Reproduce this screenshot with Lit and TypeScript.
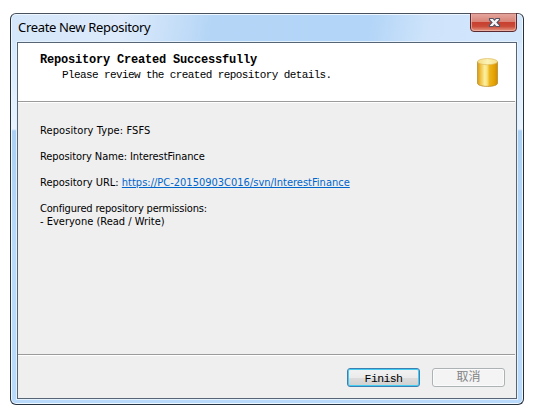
import { LitElement, html, css } from "lit";
import { customElement } from "lit/decorators.js";

@customElement("close-button")
class CloseButton extends LitElement {
  static styles = css`
    :host { display: block; width: 47px; height: 19px; }
    svg { display: block; }
  `;
  render() {
    return html`<svg width="47" height="19" viewBox="0 0 47 19">
      <defs>
        <linearGradient id="r" x1="0" y1="0" x2="0" y2="1">
          <stop offset="0" stop-color="#e5a8a0" /><stop offset=".46" stop-color="#d98578" />
          <stop offset=".5" stop-color="#c8402f" /><stop offset=".72" stop-color="#c94a38" />
          <stop offset="1" stop-color="#e8a28c" />
        </linearGradient>
      </defs>
      <path d="M.5 0V15Q.5 18.5 4 18.5H43Q46.5 18.5 46.5 15V0Z" fill="url(#r)" stroke="#5b2a30" />
      <path d="M1.5 1V14.5Q1.5 17.5 4.5 17.5H42.5Q45.5 17.5 45.5 14.5V1" fill="none" stroke="#f0b9ae" stroke-opacity=".7" />
      <path d="M19.5 5.5H23L24.5 7.2L26 5.5H29.5V7L27 9.5L29.5 12V13.5H26L24.5 11.8L23 13.5H19.5V12L22 9.5L19.5 7Z" fill="#f7f7f7" stroke="#555262" stroke-width="1.1" />
    </svg>`;
  }
}

@customElement("repository-icon")
class RepositoryIcon extends LitElement {
  static styles = css`
    :host { display: block; width: 21px; height: 29px; }
    svg { display: block; }
  `;
  render() {
    return html`<svg width="21" height="29" viewBox="0 0 22 30" preserveAspectRatio="none">
      <defs>
        <linearGradient id="b">
          <stop offset="0" stop-color="#d79a10" /><stop offset=".15" stop-color="#efc044" />
          <stop offset=".36" stop-color="#fbefa0" /><stop offset=".48" stop-color="#f8e27c" />
          <stop offset=".6" stop-color="#eeb41c" /><stop offset=".85" stop-color="#e3a000" />
          <stop offset="1" stop-color="#c98a08" />
        </linearGradient>
        <linearGradient id="t">
          <stop offset="0" stop-color="#f5dc80" /><stop offset=".5" stop-color="#fbf3b8" />
          <stop offset="1" stop-color="#f6e08a" />
        </linearGradient>
      </defs>
      <path d="M.5 4V26C.5 28 5 29.4 11 29.4S21.5 28 21.5 26V4Z" fill="url(#b)" stroke="#b98a2a" stroke-width=".8" />
      <ellipse cx="11" cy="3.8" rx="10.5" ry="3.2" fill="url(#t)" stroke="#dcb75c" stroke-width=".7" />
    </svg>`;
  }
}

@customElement("app-root")
class AppRoot extends LitElement {
  static styles = css`
    * { box-sizing: border-box; }
    :host {
      display: block; width: 534px; height: 416px; padding: 13px 0 0 10px;
      box-sizing: border-box; background: #fff; overflow: hidden; color: #000;
    }
    .window {
      width: 514px; height: 392px; display: flex; flex-direction: column;
      border: 1px solid #27323f; border-top-color: #48525e; border-radius: 6px;
      padding: 0 5px 5px; box-shadow: inset 0 0 0 1px #eef7ff;
      background:
        linear-gradient(100deg, #d5e7fa 0, #dceafb 110px, #c5def8 165px, #b4d5f6 200px, #b3d5f7 355px, #cfe4fb 415px, #d3e7fc 514px) 0 0 / 100% 29px no-repeat,
        linear-gradient(#d6e9fd 29px, #e8f3ff 115px, #abd0f3 117px, #b9dafb 240px);
    }
    .titlebar { height: 27px; flex: none; display: flex; justify-content: space-between; padding-right: 1px; }
    .titlebar close-button { margin-top: -1px; }
    .title { font: 13px/18px "Noto Sans", sans-serif; padding: 4px 0 0 2px; letter-spacing: -.33px; white-space: nowrap; }
    .client {
      display: flex; flex-direction: column; width: 500px; height: 357px; flex: none;
      margin: 1px 0 0 1px; border: 1px solid #566575; outline: 1px solid #e4f1fd; background: #efefef;
    }
    .head { height: 58px; flex: none; background: #fff; display: flex; justify-content: space-between; padding: 10px 18px 0 22px; }
    .head h1, .head p { margin: 0; font: 12px/15px "Liberation Mono", monospace; white-space: pre; }
    .head h1 { font-weight: bold; letter-spacing: -.2px; }
    .head p { padding-left: 22px; font-size: 11px; line-height: 14px; letter-spacing: -.61px; }
    .icon { margin-top: 5px; }
    .rule { height: 2px; flex: none; background: #9b9b9b; border-bottom: 1px solid #fff; margin-right: 1px; }
    .body {
      flex: 1; padding: 21px 22px 0; font: 11px/13px "DejaVu Sans Condensed", "DejaVu Sans", sans-serif;
      font-stretch: condensed; white-space: nowrap;
    }
    .body p { margin: 0 0 13px; }
    .type { letter-spacing: .1px; }
    .name { letter-spacing: -.08px; }
    .heading { letter-spacing: -.18px; }
    a { color: #0066cc; text-decoration: underline; }
    .foot { height: 42px; flex: none; display: flex; justify-content: flex-end; gap: 12px; padding: 12px 11px 0 0; }
    .btn {
      width: 73px; height: 19px; border-radius: 3px; text-align: center;
      font: 12px/17px "Liberation Mono", "Noto Sans CJK SC", monospace; padding: 1px 0 0;
    }
    .primary {
      border: 1px solid #3c7fb1; box-shadow: inset 0 0 0 1px #43cdf2; font-size: 11.5px; letter-spacing: -.6px;
      background: linear-gradient(#f2f2f2, #ebebeb 50%, #dddddd 50%, #cfcfcf);
    }
    .disabled { border: 1px solid #adb2b5; box-shadow: inset 0 0 0 1px #fbfbfb; background: #f4f4f4; color: #838383; }
  `;
  render() {
    return html`<div class="window">
      <div class="titlebar"><span class="title">Create New Repository</span><close-button></close-button></div>
      <div class="client">
        <div class="head">
          <div><h1>Repository Created Successfully</h1><p>Please review the created repository details.</p></div>
          <repository-icon class="icon"></repository-icon>
        </div>
        <div class="rule"></div>
        <div class="body">
          <p class="type">Repository Type: FSFS</p>
          <p class="name">Repository Name: InterestFinance</p>
          <p>Repository URL: <a>https://PC-20150903C016/svn/InterestFinance</a></p>
          <p><span class="heading">Configured repository permissions:</span><br />- Everyone (Read / Write)</p>
        </div>
        <div class="rule"></div>
        <div class="foot"><button class="btn primary">Finish</button><button class="btn disabled" disabled>取消</button></div>
      </div>
    </div>`;
  }
}
